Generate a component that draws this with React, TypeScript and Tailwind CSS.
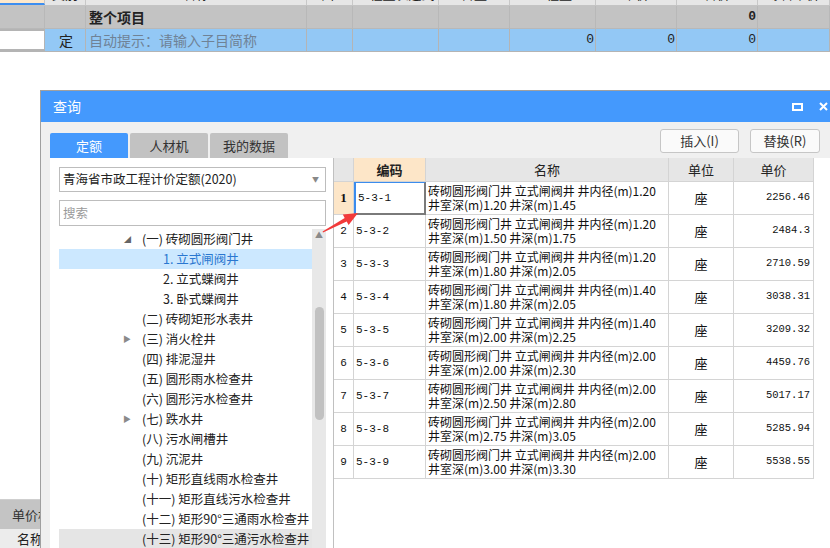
import React from 'react';

const sheetCols = [45, 41, 221, 46, 86, 71, 86, 81, 81, 72];
const sheetHead = ['编码', '类别', '名称', '单位', '工程量表达式', '含量', '工程量', '单价', '合价', '综合单价'];

const tree = [
  { t: '(一) 砖砌圆形阀门井', lvl: 1, arrow: 'open' },
  { t: '1. 立式闸阀井', lvl: 2, sel: true },
  { t: '2. 立式蝶阀井', lvl: 2 },
  { t: '3. 卧式蝶阀井', lvl: 2 },
  { t: '(二) 砖砌矩形水表井', lvl: 1 },
  { t: '(三) 消火栓井', lvl: 1, arrow: 'closed' },
  { t: '(四) 排泥湿井', lvl: 1 },
  { t: '(五) 圆形雨水检查井', lvl: 1 },
  { t: '(六) 圆形污水检查井', lvl: 1 },
  { t: '(七) 跌水井', lvl: 1, arrow: 'closed' },
  { t: '(八) 污水闸槽井', lvl: 1 },
  { t: '(九) 沉泥井', lvl: 1 },
  { t: '(十) 矩形直线雨水检查井', lvl: 1 },
  { t: '(十一) 矩形直线污水检查井', lvl: 1 },
  { t: '(十二) 矩形90°三通雨水检查井', lvl: 1 },
  { t: '(十三) 矩形90°三通污水检查井', lvl: 1, hover: true },
];

const rows = [
  ['5-3-1', '1.20', '1.20', '1.45', '2256.46'],
  ['5-3-2', '1.20', '1.50', '1.75', '2484.3'],
  ['5-3-3', '1.20', '1.80', '2.05', '2710.59'],
  ['5-3-4', '1.40', '1.80', '2.05', '3038.31'],
  ['5-3-5', '1.40', '2.00', '2.25', '3209.32'],
  ['5-3-6', '2.00', '2.00', '2.30', '4459.76'],
  ['5-3-7', '2.00', '2.50', '2.80', '5017.17'],
  ['5-3-8', '2.00', '2.75', '3.05', '5285.94'],
  ['5-3-9', '2.00', '3.00', '3.30', '5538.55'],
];

function Sheet() {
  return (
    <div className="flex flex-col">
      {/* header row, mostly scrolled out of view */}
      <div className="flex h-[24px] -mt-[18px] bg-[#e6e6e6] border-b border-[#c4c4c4]">
        {sheetCols.map((w, i) => (
          <div
            key={i}
            style={{ width: w }}
            className={`shrink-0 flex items-center justify-center border-r border-[#c8c8c8] text-[13px] text-[#222] ${
              i === 0 ? 'bg-[#fde8cc] border-b-2 border-b-[#3d8ef0]' : ''
            }`}
          >
            {sheetHead[i]}
          </div>
        ))}
      </div>
      <div className="flex h-[23px] bg-[#c3c3c3] border-b border-[#b8b8b8]">
        {sheetCols.map((w, i) => (
          <div key={i} style={{ width: w }} className="shrink-0 flex items-center border-r border-[#b8b8b8] pl-[3px] pr-[1px]">
            {i === 2 && <span className="text-[14px] font-bold text-[#222]">整个项目</span>}
            {i === 8 && <span className="ml-auto font-bold text-[13px] text-[#222] font-['Liberation_Mono',monospace]">0</span>}
          </div>
        ))}
      </div>
      <div className="flex h-[23px] bg-[#93c8f5] border-b border-[#b4b4b4]">
        {sheetCols.map((w, i) => (
          <div
            key={i}
            style={{ width: w }}
            className={`shrink-0 flex items-center border-r border-[#b4b4b4] pl-[3px] pr-[1px] ${
              i === 0 ? 'bg-white border-2 border-[#7d7d7d] border-l-0' : ''
            }`}
          >
            {i === 1 && <span className="mx-auto text-[14px] text-[#222]">定</span>}
            {i === 2 && <span className="text-[14px] text-[#6f8296]">自动提示：请输入子目简称</span>}
            {(i === 6 || i === 7 || i === 8) && (
              <span className="ml-auto text-[13px] text-[#222] font-['Liberation_Mono',monospace]">0</span>
            )}
          </div>
        ))}
      </div>
    </div>
  );
}

function TreePanel() {
  return (
    <div className="w-[283px] shrink-0 bg-white pl-[9px] pt-[9px] flex flex-col">
      <div className="w-[267px] h-[25px] border border-[#bdbdbd] flex items-center pl-[3px] pr-[6px] text-[12.5px] text-[#222]">
        <span>青海省市政工程计价定额(2020)</span>
        <span className="ml-auto text-[7px] text-[#888]">▼</span>
      </div>
      <div className="w-[267px] h-[26px] mt-[8px] border border-[#bdbdbd] flex items-center pl-[3px] text-[12.5px] text-[#9a9a9a]">
        搜索
      </div>
      <div className="flex mt-[3px] flex-1">
        <div className="w-[253px] flex flex-col">
          {tree.map((n, i) => (
            <div
              key={i}
              className={`h-[20px] shrink-0 flex items-center text-[12.5px] whitespace-nowrap ${
                n.sel ? 'bg-[#cce8ff] text-[#2a77d0]' : n.hover ? 'bg-[#e5e5e5] text-[#222]' : 'text-[#222]'
              }`}
            >
              <span className={`shrink-0 flex justify-end ${n.lvl === 1 ? 'w-[83px]' : 'w-[104px]'}`}>
                {n.arrow === 'open' && <span className="mr-[11px] text-[7px] text-[#666]">◢</span>}
                {n.arrow === 'closed' && <span className="mr-[11px] text-[8px] text-[#8a8a8a]">▶</span>}
              </span>
              <span>{n.t}</span>
            </div>
          ))}
        </div>
        <div className="w-[14px] bg-[#e8e8e8] flex flex-col items-center">
          <span className="text-[8px] leading-[10px] mt-[1px] text-[#8a8a8a]">▲</span>
          <div className="w-[9px] h-[113px] mt-[67px] rounded-full bg-[#c1c1c1]" />
        </div>
      </div>
    </div>
  );
}

function DataTable() {
  const cell = 'shrink-0 border-r border-b border-[#d4d4d4] flex items-center';
  return (
    <div className="flex-1 bg-white border-l border-[#c0c0c0] flex flex-col">
      <div className="flex h-[24px] text-[13px] text-[#222]">
        <div className={`${cell} w-[20px] bg-[#e6e6e6]`} />
        <div className={`${cell} w-[72px] bg-[#fde6c8] justify-center font-bold`}>编码</div>
        <div className={`${cell} w-[243px] bg-[#e6e6e6] justify-center`}>名称</div>
        <div className={`${cell} w-[65px] bg-[#e6e6e6] justify-center`}>单位</div>
        <div className={`${cell} w-[80px] bg-[#e6e6e6] justify-center`}>单价</div>
      </div>
      {rows.map((r, i) => (
        <div key={i} className="flex h-[33px] text-[12px] text-[#111]">
          <div
            className={`${cell} w-[20px] justify-center ${
              i === 0 ? "bg-[#fde6c8] font-bold font-['Liberation_Serif',serif] text-[13px]" : "bg-white font-['Liberation_Mono',monospace] text-[11px]"
            }`}
          >
            {i + 1}
          </div>
          <div
            className={`${cell} w-[72px] pl-[2px] font-['Liberation_Mono',monospace] text-[11px] ${
              i === 0 ? 'border-l-2 border-l-[#3b8ced] border-t border-t-[#3b8ced] border-b-2 border-b-[#7a7a7a] border-r-2 border-r-[#7a7a7a]' : ''
            }`}
          >
            {r[0]}
          </div>
          <div className={`${cell} w-[243px] pl-[2px] flex-col !items-start justify-center leading-[14px] whitespace-nowrap`}>
            <div>砖砌圆形阀门井 立式闸阀井 井内径(m){r[1]}</div>
            <div>井室深(m){r[2]} 井深(m){r[3]}</div>
          </div>
          <div className={`${cell} w-[65px] justify-center text-[13px]`}>座</div>
          <div className={`${cell} w-[80px] justify-end pr-[3px] font-['Liberation_Mono',monospace] text-[10.5px]`}>{r[4]}</div>
        </div>
      ))}
    </div>
  );
}

function QueryDialog() {
  return (
    <div className="absolute left-[40px] top-[90px] w-[798px] h-[470px] border border-[#a0a0a0] bg-[#f0f0f0] flex flex-col">
      <div className="h-[31px] shrink-0 bg-[#4499fd] flex items-center pl-[12px] pr-[9px] text-white">
        <span className="text-[14px]">查询</span>
        <svg className="ml-auto mr-[16px]" width="11" height="8" viewBox="0 0 11 8">
          <rect x="1" y="1" width="9" height="6" fill="none" stroke="white" strokeWidth="2" />
        </svg>
        <svg width="9" height="9" viewBox="0 0 9 9">
          <path d="M1 1L8 8M8 1L1 8" stroke="white" strokeWidth="2" />
        </svg>
      </div>
      <div className="h-[36px] shrink-0 flex pl-[9px] pr-[17px]">
        <div className="flex items-end gap-[2px] text-[13px]">
          <div className="w-[78px] h-[25px] rounded-t-[2px] bg-[#4499fd] text-white flex items-center justify-center">定额</div>
          <div className="w-[78px] h-[25px] rounded-t-[2px] bg-[#c2c2c2] text-[#333] flex items-center justify-center">人材机</div>
          <div className="w-[78px] h-[25px] rounded-t-[2px] bg-[#c2c2c2] text-[#333] flex items-center justify-center">我的数据</div>
        </div>
        <div className="ml-auto flex gap-[11px] mt-[7px] text-[13px] text-[#333]">
          <div className="w-[79px] h-[24px] rounded-[3px] border border-[#c6c6c6] bg-[#fafafa] flex items-center justify-center">插入(I)</div>
          <div className="w-[70px] h-[24px] rounded-[3px] border border-[#c6c6c6] bg-[#fafafa] flex items-center justify-center">替换(R)</div>
        </div>
      </div>
      <div className="flex flex-1 pl-[9px]">
        <TreePanel />
        <DataTable />
      </div>
    </div>
  );
}

export default function App() {
  return (
    <div className="relative w-[830px] h-[548px] overflow-hidden bg-white font-['Noto_Sans_CJK_SC','Noto_Sans',sans-serif]">
      <div className="flex flex-col h-full">
        <Sheet />
        <div className="flex-1" />
        <div className="h-[49px] shrink-0 border-t border-[#cfcfcf] flex flex-col">
          <div className="h-[30px] bg-[#c4c4c4] flex items-center pl-[12px] text-[13px] text-[#333] whitespace-nowrap">单价构成</div>
          <div className="flex-1 bg-[#ececec] flex items-center pl-[17px] text-[13px] text-[#222]">名称</div>
        </div>
      </div>
      <QueryDialog />
      {/* red pointer arrow */}
      <svg className="absolute left-[318px] top-[205px]" width="45" height="32" viewBox="318 205 45 32">
        <polygon
          points="323,232.6 346.7,221.5 348.6,225 358,213 342.8,214.4 344.7,217.9 322.6,231.6"
          fill="#f23a3a"
        />
      </svg>
    </div>
  );
}
